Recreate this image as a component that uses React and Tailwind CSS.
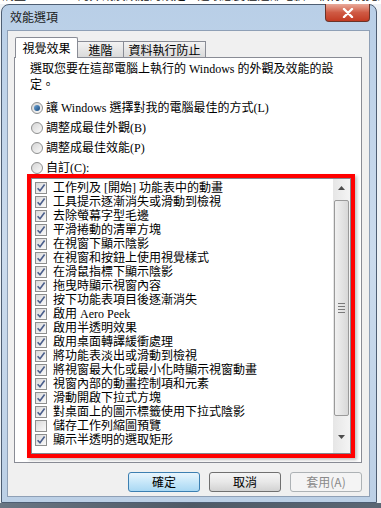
import React from 'react';

const items = [
  { label: '工作列及 [開始] 功能表中的動畫', on: true },
  { label: '工具提示逐漸消失或滑動到檢視', on: true },
  { label: '去除螢幕字型毛邊', on: true },
  { label: '平滑捲動的清單方塊', on: true },
  { label: '在視窗下顯示陰影', on: true },
  { label: '在視窗和按鈕上使用視覺樣式', on: true },
  { label: '在滑鼠指標下顯示陰影', on: true },
  { label: '拖曳時顯示視窗內容', on: true },
  { label: '按下功能表項目後逐漸消失', on: true },
  { label: '啟用 Aero Peek', on: true },
  { label: '啟用半透明效果', on: true },
  { label: '啟用桌面轉譯緩衝處理', on: true },
  { label: '將功能表淡出或滑動到檢視', on: true },
  { label: '將視窗最大化或最小化時顯示視窗動畫', on: true },
  { label: '視窗內部的動畫控制項和元素', on: true },
  { label: '滑動開啟下拉式方塊', on: true },
  { label: '對桌面上的圖示標籤使用下拉式陰影', on: true },
  { label: '儲存工作列縮圖預覽', on: false },
  { label: '顯示半透明的選取矩形', on: true },
];

const radios = [
  { label: '讓 Windows 選擇對我的電腦最佳的方式(L)', on: true },
  { label: '調整成最佳外觀(B)', on: false },
  { label: '調整成最佳效能(P)', on: false },
  { label: '自訂(C):', on: false },
];

function Radio({ on }) {
  return (
    <span className="flex h-[12px] w-[12px] shrink-0 items-center justify-center rounded-full border border-[#8e8f8f] bg-gradient-to-br from-[#d4d4d4] to-[#fbfbfb]">
      {on && <span className="h-[6px] w-[6px] rounded-full bg-gradient-to-br from-[#6fa6d6] to-[#174a7e]" />}
    </span>
  );
}

function Check({ on }) {
  return (
    <span className="flex h-[12px] w-[12px] shrink-0 items-center justify-center border border-[#8e8f8f] bg-gradient-to-br from-[#d9d9d9] to-[#fafafa]">
      {on && (
        <svg width="10" height="10" viewBox="0 0 10 10">
          <path d="M1.6 5.2 L4 7.8 L8.6 1.6" fill="none" stroke="#4a5e8c" strokeWidth="1.6" />
        </svg>
      )}
    </span>
  );
}

function Scrollbar() {
  return (
    <div className="flex h-full w-[17px] shrink-0 flex-col items-center bg-gradient-to-r from-[#e6e6e6] to-[#f4f4f4]">
      <div className="flex h-[17px] w-full items-center justify-center">
        <svg width="7" height="4" viewBox="0 0 7 4"><path d="M0 4 L3.5 0 L7 4Z" fill="#4d4d4d" /></svg>
      </div>
      <div className="mt-[4px] flex h-[216px] w-[15px] items-center justify-center rounded-[2px] border border-[#9a9a9a] bg-gradient-to-r from-[#f1f1f1] to-[#d8d8d8]">
        <div className="flex flex-col gap-[2px]">
          <span className="h-px w-[7px] bg-[#7a7a7a]" />
          <span className="h-px w-[7px] bg-[#7a7a7a]" />
          <span className="h-px w-[7px] bg-[#7a7a7a]" />
          <span className="h-px w-[7px] bg-[#7a7a7a]" />
        </div>
      </div>
      <div className="mt-[12px] flex h-[17px] w-full items-center justify-center">
        <svg width="7" height="4" viewBox="0 0 7 4"><path d="M0 0 L3.5 4 L7 0Z" fill="#4d4d4d" /></svg>
      </div>
    </div>
  );
}

export default function App() {
  return (
    <div className="flex h-[508px] w-[381px] flex-col overflow-hidden bg-[#eef2f6] font-['Liberation_Serif','Noto_Sans_CJK_TC',serif] text-[12px] text-black">
      {/* window behind */}
      <div className="h-[4px] overflow-hidden bg-white pl-[2px]">
        <div className="-mt-[11px] whitespace-nowrap leading-[14px] text-[#111]">
          調整 Windows 的外觀及效能的設定，選取您要在這部電腦上執行的視覺效果。
        </div>
      </div>

      {/* Dialog window */}
      <div className="ml-[1px] flex h-[499px] w-[376px] flex-col rounded-t-[8px] border border-[#4e5e73] bg-gradient-to-b from-[#b9cfe7] via-[#cbdbed] to-[#bcd0e6]">
        {/* Title bar */}
        <div className="flex h-[25px] shrink-0 items-start justify-between">
          <div className="pl-[8px] pt-[5px] font-['Noto_Sans_CJK_TC',sans-serif] leading-[14px] text-[#1b1b1b]">效能選項</div>
          <div className="-mt-[1px] mr-[6px] flex h-[18px] w-[45px] items-center justify-center rounded-b-[4px] border border-t-0 border-[#6b3329] bg-gradient-to-b from-[#e9a99a] via-[#cf5a44] to-[#c23a22]">
            <svg width="12" height="10" viewBox="0 0 12 10">
              <path d="M2 1 L10 9 M10 1 L2 9" stroke="#ffffff" strokeWidth="2.4" strokeLinecap="round" />
            </svg>
          </div>
        </div>

        {/* Client area */}
        <div className="ml-[5px] mr-[6px] flex h-[467px] flex-col border border-[#8fa0b6] bg-[#f0f0f0]">
          {/* Tabs */}
          <div className="relative z-10 -mb-px mt-[6px] flex h-[21px] items-end pl-[7px] font-['Noto_Sans_CJK_TC',sans-serif]">
            <div className="flex h-[21px] w-[63px] items-center justify-center rounded-t-[2px] border border-b-0 border-[#898c95] bg-white pb-[1px]">視覺效果</div>
            <div className="flex h-[17px] w-[46px] items-center justify-center border border-l-0 border-[#898c95] bg-gradient-to-b from-[#f3f3f3] to-[#dadada]">進階</div>
            <div className="flex h-[17px] w-[82px] items-center justify-center border border-l-0 border-[#898c95] bg-gradient-to-b from-[#f3f3f3] to-[#dadada]">資料執行防止</div>
          </div>

          {/* Tab panel */}
          <div className="ml-[6px] mr-[7px] h-[406px] border border-[#898c95] bg-white">
            <div className="pl-[15px] pt-[3px] leading-[16px]">
              <div className="whitespace-nowrap">選取您要在這部電腦上執行的 Windows 的外觀及效能的設</div>
              <div>定。</div>
            </div>

            <div className="mt-[5px] flex flex-col">
              {radios.map((r) => (
                <div key={r.label} className="flex h-[20px] items-center gap-[3px] pl-[16px]">
                  <Radio on={r.on} />
                  <span className="leading-[14px]">{r.label}</span>
                </div>
              ))}
            </div>

            {/* List box with red annotation */}
            <div className="relative ml-[16px] h-[276px] w-[320px]">
              <div className="flex h-full w-full border border-[#828790] bg-white">
                <div className="flex flex-1 flex-col pl-[3px] pt-[2px]">
                  {items.map((it) => (
                    <div key={it.label} className="flex h-[14px] items-center gap-[6px]">
                      <Check on={it.on} />
                      <span className="whitespace-nowrap leading-[14px]">{it.label}</span>
                    </div>
                  ))}
                </div>
                <Scrollbar />
              </div>
              <div className="pointer-events-none absolute -inset-[4px] border-[4px] border-[#ff0000] shadow-[2px_2px_3px_rgba(0,0,0,0.25)]" />
            </div>
          </div>

          {/* Buttons */}
          <div className="mr-[7px] mt-[9px] flex justify-end gap-[9px] font-['Noto_Sans_CJK_TC',sans-serif]">
            <div className="flex h-[20px] w-[72px] items-center justify-center rounded-[3px] border border-[#3c7fb1] bg-gradient-to-b from-[#e8f5fd] via-[#c7e7f9] to-[#a9d8f3] leading-[14px]">確定</div>
            <div className="flex h-[20px] w-[72px] items-center justify-center rounded-[3px] border border-[#707070] bg-gradient-to-b from-[#f4f4f4] via-[#e8e8e8] to-[#d2d2d2] leading-[14px]">取消</div>
            <div className="flex h-[20px] w-[72px] items-center justify-center rounded-[3px] border border-[#adb2b5] bg-[#f4f4f4] leading-[14px] text-[#8a8a8a]">套用(A)</div>
          </div>
        </div>
      </div>

      <div className="flex-1 bg-gradient-to-r from-[#6a7683] via-[#4f5a66] to-[#5b6774]" />
    </div>
  );
}
